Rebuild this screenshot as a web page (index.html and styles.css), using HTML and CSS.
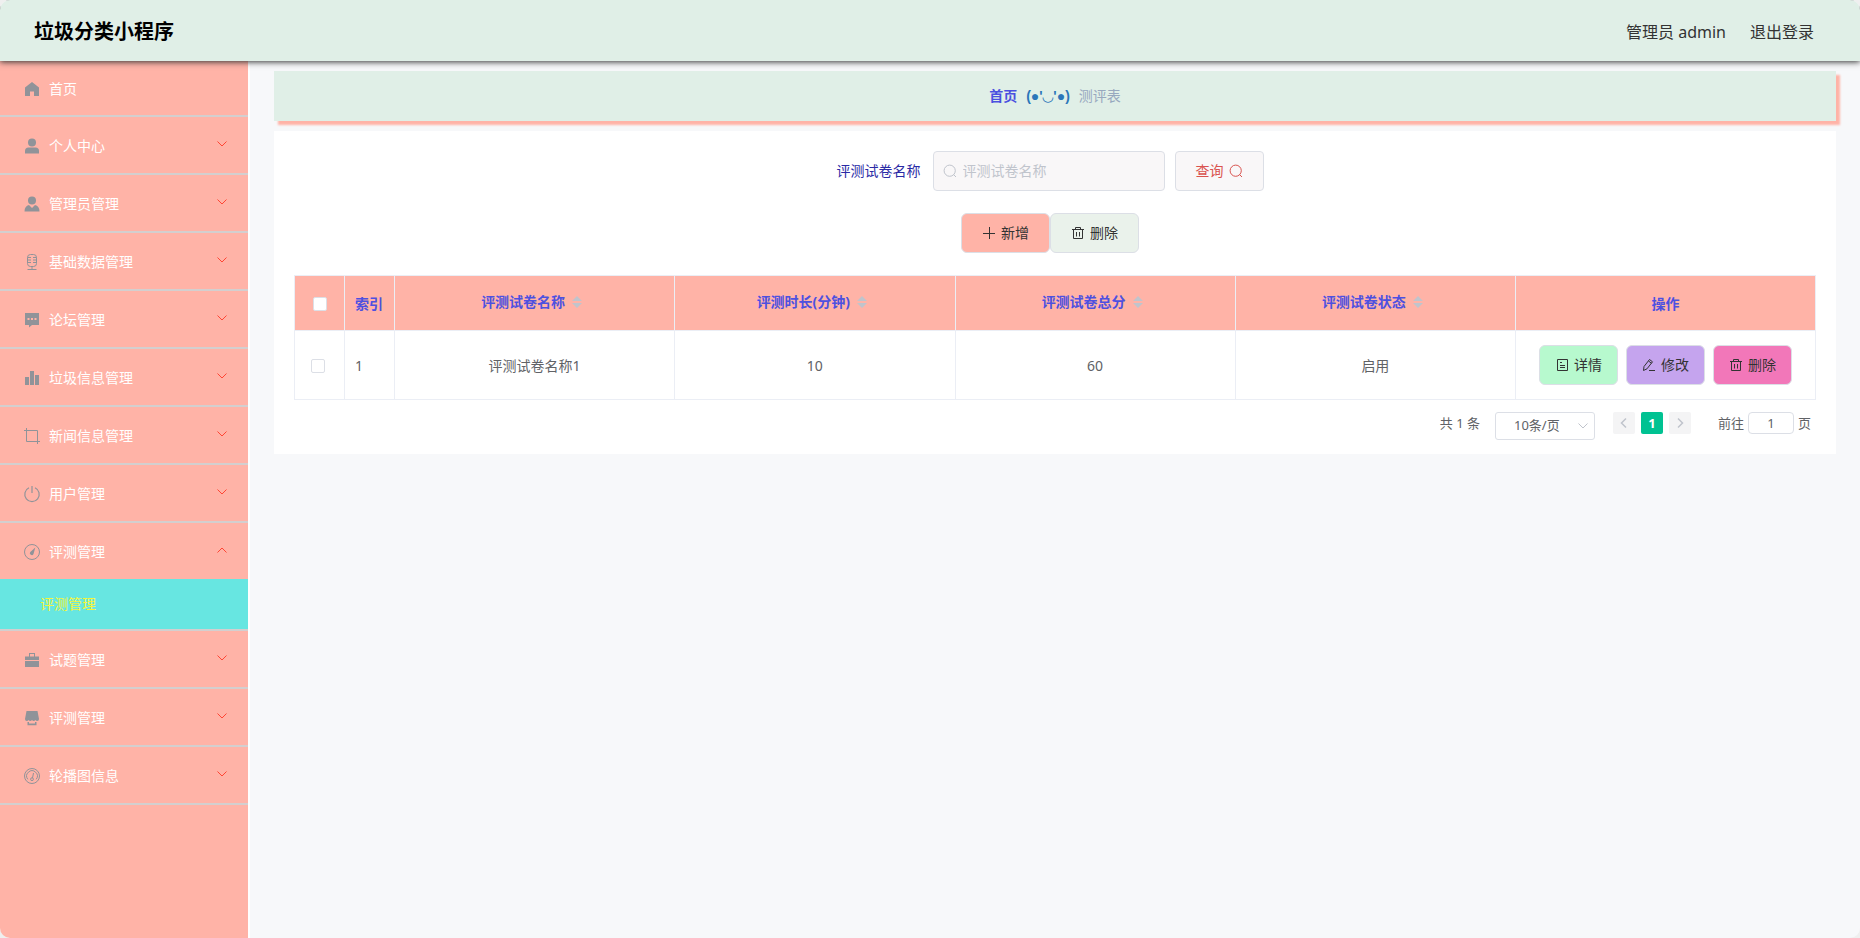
FILE: index.html
```html
<!DOCTYPE html>
<html lang="zh-CN">
<head>
<meta charset="utf-8">
<title>垃圾分类小程序</title>
<link rel="stylesheet" href="styles.css">
</head>
<body>
<svg class="sprite" aria-hidden="true">
  <symbol id="down" viewBox="0 0 12 12"><path d="M1.500 3.500 6 8l4.500-4.500" fill="none" stroke="currentColor"/></symbol>
  <symbol id="search" viewBox="0 0 14 14"><circle cx="6.700" cy="6.700" r="5.600" fill="none" stroke="currentColor"/><path d="m10.500 10.500 2.500 2.500" stroke="currentColor"/></symbol>
  <symbol id="trash" viewBox="0 0 14 14"><path d="M1 3.500h12M4.500 3.500v-2h5v2M2.500 3.500v9h9v-9M5.500 6v4.500M8.500 6v4.500" fill="none" stroke="currentColor"/></symbol>
  <symbol id="sort" viewBox="0 0 10 14"><path d="M5 1l5 5H0zM0 8h10l-5 5z" fill="currentColor"/></symbol>
</svg>
<div class="app">
  <header class="topbar">
    <h1 class="brand">垃圾分类小程序</h1>
    <span class="account">管理员 admin</span>
    <a class="logout" href="#">退出登录</a>
  </header>
  <div class="body">
    <nav class="sidebar">
      <ul class="menu">
        <li class="entry"><a class="item home" href="#"><svg class="glyph" viewBox="0 0 18 18"><path d="M9 2 2 7.500V16h5v-4.500h4V16h5V7.500z" fill="currentColor"/></svg><span>首页</span></a></li>
        <li class="entry"><button class="item" type="button"><svg class="glyph" viewBox="0 0 18 18"><circle cx="9" cy="5.500" r="4" fill="currentColor"/><path d="M2 16.500V14q0-3.500 3.500-3.500h7q3.500 0 3.500 3.500v2.500z" fill="currentColor"/></svg><span>个人中心</span><svg class="arrow"><use href="#down"/></svg></button></li>
        <li class="entry"><button class="item" type="button"><svg class="glyph" viewBox="0 0 18 18"><circle cx="9" cy="5.500" r="4" fill="currentColor"/><path d="M1.500 16.500q0-5.500 4.500-6.500l3 3 3-3q4.500 1 4.500 6.500z" fill="currentColor"/></svg><span>管理员管理</span><svg class="arrow"><use href="#down"/></svg></button></li>
        <li class="entry"><button class="item" type="button"><svg class="glyph" viewBox="0 0 18 18"><rect x="4.500" y="1.500" width="9" height="12" rx="3" fill="none" stroke="currentColor"/><path d="M4.500 4.500H8M10 4.500h3.500M4.500 7H8M10 7h3.500M4.500 9.500H8M10 9.500h3.500M9 13.500v3M4.500 16.500h9" stroke="currentColor"/></svg><span>基础数据管理</span><svg class="arrow"><use href="#down"/></svg></button></li>
        <li class="entry"><button class="item" type="button"><svg class="glyph" viewBox="0 0 18 18"><path d="M2 2h14v12H9l-3 2.500V14H2zm2.500 5v2h2V7zm3.500 0v2h2V7zm3.500 0v2h2V7z" fill="currentColor" fill-rule="evenodd"/></svg><span>论坛管理</span><svg class="arrow"><use href="#down"/></svg></button></li>
        <li class="entry"><button class="item" type="button"><svg class="glyph" viewBox="0 0 18 18"><path d="M2 8h4v8H2zM7 2h4v14H7zM12 6h4v10h-4z" fill="currentColor"/></svg><span>垃圾信息管理</span><svg class="arrow"><use href="#down"/></svg></button></li>
        <li class="entry"><button class="item" type="button"><svg class="glyph" viewBox="0 0 18 18"><path d="M1 3.500h13.500V17M3.500 1v13.500H17" fill="none" stroke="currentColor"/></svg><span>新闻信息管理</span><svg class="arrow"><use href="#down"/></svg></button></li>
        <li class="entry"><button class="item" type="button"><svg class="glyph" viewBox="0 0 18 18"><path d="M6 2.800a7.200 7.200 0 1 0 6 0M9 1v7" fill="none" stroke="currentColor" stroke-width="1.200"/></svg><span>用户管理</span><svg class="arrow"><use href="#down"/></svg></button></li>
        <li class="entry">
          <button class="item" type="button" aria-expanded="true"><svg class="glyph" viewBox="0 0 18 18"><circle cx="9" cy="9" r="7.500" fill="none" stroke="currentColor"/><path d="M12.300 4.500 10.500 11a1.900 1.900 0 1 1-3.200-2z" fill="currentColor"/></svg><span>评测管理</span><svg class="arrow up"><use href="#down"/></svg></button>
          <a class="subitem" href="#">评测管理</a>
        </li>
        <li class="entry"><button class="item" type="button"><svg class="glyph" viewBox="0 0 18 18"><path d="M2 9V5.500h4V2h6v3.500h4V9zm5-3.500h4V3H7zM2 10h14v6H2z" fill="currentColor" fill-rule="evenodd"/></svg><span>试题管理</span><svg class="arrow"><use href="#down"/></svg></button></li>
        <li class="entry"><button class="item" type="button"><svg class="glyph" viewBox="0 0 18 18"><path d="M3.500 2h11L16 10q0 2-1.800 2-1.200 0-1.700-1-.8 1-1.800 1T9 11q-.7 1-1.700 1t-1.800-1q-.5 1-1.700 1Q2 12 2 10zM4.500 13H6v1.500h6V13h1.500v3.200h-9z" fill="currentColor"/></svg><span>评测管理</span><svg class="arrow"><use href="#down"/></svg></button></li>
        <li class="entry"><button class="item" type="button"><svg class="glyph" viewBox="0 0 18 18"><circle cx="9" cy="9" r="7.500" fill="none" stroke="currentColor"/><path d="M4.800 12.300a5.300 5.300 0 1 1 8.400 0M10.500 6l-1 5" fill="none" stroke="currentColor"/><circle cx="9" cy="12.200" r="1.400" fill="none" stroke="currentColor"/></svg><span>轮播图信息</span><svg class="arrow"><use href="#down"/></svg></button></li>
      </ul>
    </nav>
    <main class="main">
      <nav class="crumbs" aria-label="面包屑"><a class="crumb-home" href="#">首页</a><span class="crumb-face">(●'◡'●)</span><span class="crumb-now">测评表</span></nav>
      <section class="card">
        <form class="filter">
          <label class="filter-label" for="paper">评测试卷名称</label>
          <span class="search-box"><svg class="icon"><use href="#search"/></svg><input class="search-input" id="paper" type="text" placeholder="评测试卷名称"></span>
          <button class="btn query" type="button">查询<svg class="icon"><use href="#search"/></svg></button>
        </form>
        <div class="actions">
          <button class="btn add" type="button"><svg class="icon" viewBox="0 0 14 14"><path d="M1 7.500h12M7.500 1v12" stroke="currentColor"/></svg>新增</button>
          <button class="btn remove" type="button"><svg class="icon"><use href="#trash"/></svg>删除</button>
        </div>
        <table class="table">
          <colgroup><col class="narrow"><col class="narrow"><col><col><col><col><col class="ops-col"></colgroup>
          <thead>
            <tr>
              <th class="pick"><input class="check" type="checkbox" aria-label="全选"></th>
              <th class="index">索引</th>
              <th><span class="sortable">评测试卷名称<svg class="caret"><use href="#sort"/></svg></span></th>
              <th><span class="sortable">评测时长(分钟)<svg class="caret"><use href="#sort"/></svg></span></th>
              <th><span class="sortable">评测试卷总分<svg class="caret"><use href="#sort"/></svg></span></th>
              <th><span class="sortable">评测试卷状态<svg class="caret"><use href="#sort"/></svg></span></th>
              <th>操作</th>
            </tr>
          </thead>
          <tbody>
            <tr>
              <td class="pick"><input class="check" type="checkbox" aria-label="选择第1行"></td>
              <td class="index">1</td>
              <td>评测试卷名称1</td>
              <td>10</td>
              <td>60</td>
              <td>启用</td>
              <td class="ops-cell">
                <div class="ops">
                  <button class="btn small detail" type="button"><svg class="icon" viewBox="0 0 14 14"><path d="M2.500 1.500h10v11h-10zM5 4.500h2M5 7.500h5M5 9.500h5" fill="none" stroke="currentColor"/></svg>详情</button>
                  <button class="btn small edit" type="button"><svg class="icon" viewBox="0 0 14 14"><path d="m2 8.500 5.500-7 3 2.300-5.500 7-3.500 1.700zM6.500 3l3 2.300M7 12.500h6" fill="none" stroke="currentColor"/></svg>修改</button>
                  <button class="btn small drop" type="button"><svg class="icon"><use href="#trash"/></svg>删除</button>
                </div>
              </td>
            </tr>
          </tbody>
        </table>
        <div class="pager">
          <span class="total">共 1 条</span>
          <span class="size-box"><select class="size" aria-label="每页条数"><option>10条/页</option></select><svg class="size-arrow"><use href="#down"/></svg></span>
          <div class="pages">
            <button class="page" type="button" aria-label="上一页" disabled><svg class="step prev" viewBox="0 0 12 12"><path d="m4 1.500 4.500 4.500L4 10.500" fill="none" stroke="currentColor" stroke-width="1.500"/></svg></button>
            <button class="page current" type="button">1</button>
            <button class="page" type="button" aria-label="下一页" disabled><svg class="step" viewBox="0 0 12 12"><path d="m4 1.500 4.500 4.500L4 10.500" fill="none" stroke="currentColor" stroke-width="1.500"/></svg></button>
          </div>
          <label class="jump">前往<input class="jump-input" type="text" value="1">页</label>
        </div>
      </section>
    </main>
  </div>
</div>
</body>
</html>
```
FILE: styles.css
```css
* { box-sizing: border-box; }
body { margin: 0; background: #efefef; font: 14px/20px "Noto Sans", "Noto Sans CJK SC", sans-serif; color: #606266; }
button, input, select { font: inherit; color: inherit; margin: 0; }
button { cursor: pointer; }
a { text-decoration: none; }
.sprite { display: none; }

.app { display: flex; flex-direction: column; min-height: 100vh; border-radius: 10px; overflow: hidden; background: #f7f8fa; }
.topbar { display: flex; align-items: center; position: relative; z-index: 1; height: 61px; padding: 2px 46px 0 34px; background: #e0efe7; box-shadow: 0 1px 6px #333; }
.brand { margin: 0 auto 0 0; padding-top: 1px; font-size: 20px; line-height: 28px; font-weight: 700; color: #000; }
.account, .logout { font-size: 16px; line-height: 24px; color: #333; }
.logout { margin-left: 24px; }
.body { display: flex; flex: 1; }

.sidebar { flex: 0 0 250px; border-right: 2px solid #fff; background: #ffb3a7; }
.menu { margin: 0; padding: 0; list-style: none; }
.entry { border-bottom: 2px solid #d3cfcf; }
.item { display: flex; align-items: center; width: 100%; height: 56px; padding: 2px 20px 0 23px; border: 0; background: none; color: #fff; text-align: left; }
.item.home { height: 54px; }
.glyph { width: 18px; height: 18px; margin-right: 8px; color: #909399; }
.arrow { width: 12px; height: 12px; margin: 0 0 4px auto; color: #ff4534; }
.arrow.up { transform: rotate(180deg); }
.subitem { display: block; padding: 15px 40px; background: #67e6e1; color: #f5f53c; }

.main { flex: 1; min-width: 0; padding: 10px 24px; }
.crumbs { display: flex; justify-content: center; align-items: center; height: 50px; margin-bottom: 10px; background: #e0efe7; box-shadow: 4px 4px 2px #ffb3a7; }
.crumb-home { font-weight: 700; color: #4a50e0; }
.crumb-face { margin: 0 9px; font-family: "Liberation Sans", "DejaVu Sans", sans-serif; font-weight: 700; color: #2b76b9; }
.crumb-now { color: #97a8be; }
.card { padding: 20px 20px 14px; background: #fff; }

.filter { display: flex; justify-content: center; gap: 10px; align-items: center; margin-bottom: 22px; padding-right: 10px; }
.filter-label { padding-right: 2px; color: #2a2aa5; }
.search-box { display: flex; align-items: center; width: 232px; height: 40px; padding: 0 9px; border: 1px solid #dcdfe6; border-radius: 4px; background: #f9f7f8; color: #c0c4cc; }
.search-input { flex: 1; min-width: 0; padding: 0 0 0 6px; border: 0; outline: 0; background: none; color: #606266; }
.search-input::placeholder { color: #c0c4cc; }
.icon { flex: none; width: 14px; height: 14px; }
.btn { display: inline-flex; align-items: center; justify-content: center; gap: 5px; height: 40px; padding: 0 20px; border: 1px solid #dcdfe6; border-radius: 6px; color: #333; }
.btn.small { padding: 0 15px; }
.query { border-radius: 4px; background: #f9f7f8; color: #d9534f; }
.actions { display: flex; justify-content: center; margin-bottom: 22px; padding-right: 10px; }
.add { background: #ffb3a7; }
.remove { background: #eaf2eb; }

.table { width: 100%; table-layout: fixed; border-collapse: collapse; }
.narrow { width: 50px; }
.ops-col { width: 300px; }
.table th, .table td { padding: 2px 10px 0; border: 1px solid #ebeef5; text-align: center; }
.table th { height: 55px; background: #ffb3a7; font-weight: 700; color: #4d50e0; }
.table td { height: 69px; }
.table .index { text-align: left; }
.table th.pick { padding: 2px 0 0; }
.table td.pick { padding: 2px 4px 0 0; }
.table td.ops-cell { padding: 0 10px; }
.check { appearance: none; display: block; width: 14px; height: 14px; margin: 0 auto; border: 1px solid #dcdfe6; border-radius: 2px; background: #fff; }
.check:checked { background: #00c292; }
.sortable { display: inline-flex; align-items: center; padding: 0 6px 4px 0; }
.caret { width: 10px; height: 14px; margin: 0 0 0 7px; color: #c0c4cc; }
.ops { display: flex; justify-content: center; gap: 8px; }
.detail { background: #b7f9ce; }
.edit { background: #c5a4ee; }
.drop { background: #f277b9; }

.pager { display: flex; justify-content: flex-end; align-items: flex-start; margin-top: 12px; padding-right: 5px; font-size: 13px; line-height: 22px; }
.total { margin-right: 15px; }
.size-box { position: relative; width: 100px; margin-right: 18px; }
.size { appearance: none; display: block; width: 100%; height: 28px; padding: 0 18px 2px; border: 1px solid #dcdfe6; border-radius: 3px; background: #fff; }
.size-arrow { position: absolute; right: 6px; top: 8px; width: 12px; height: 12px; color: #c0c4cc; pointer-events: none; }
.pages { display: flex; gap: 6px; margin-right: 27px; }
.page { display: flex; align-items: center; justify-content: center; width: 22px; height: 22px; padding: 0; border: 0; border-radius: 2px; background: #f4f4f5; color: #c0c4cc; }
.page.current { background: #00c292; color: #fff; font-weight: 700; }
.step { width: 12px; height: 12px; }
.step.prev { transform: rotate(180deg); }
.jump { display: flex; }
.jump-input { width: 46px; height: 22px; margin: 0 4px; padding: 0; border: 1px solid #dcdfe6; border-radius: 4px; background: #fff; text-align: center; }
```
